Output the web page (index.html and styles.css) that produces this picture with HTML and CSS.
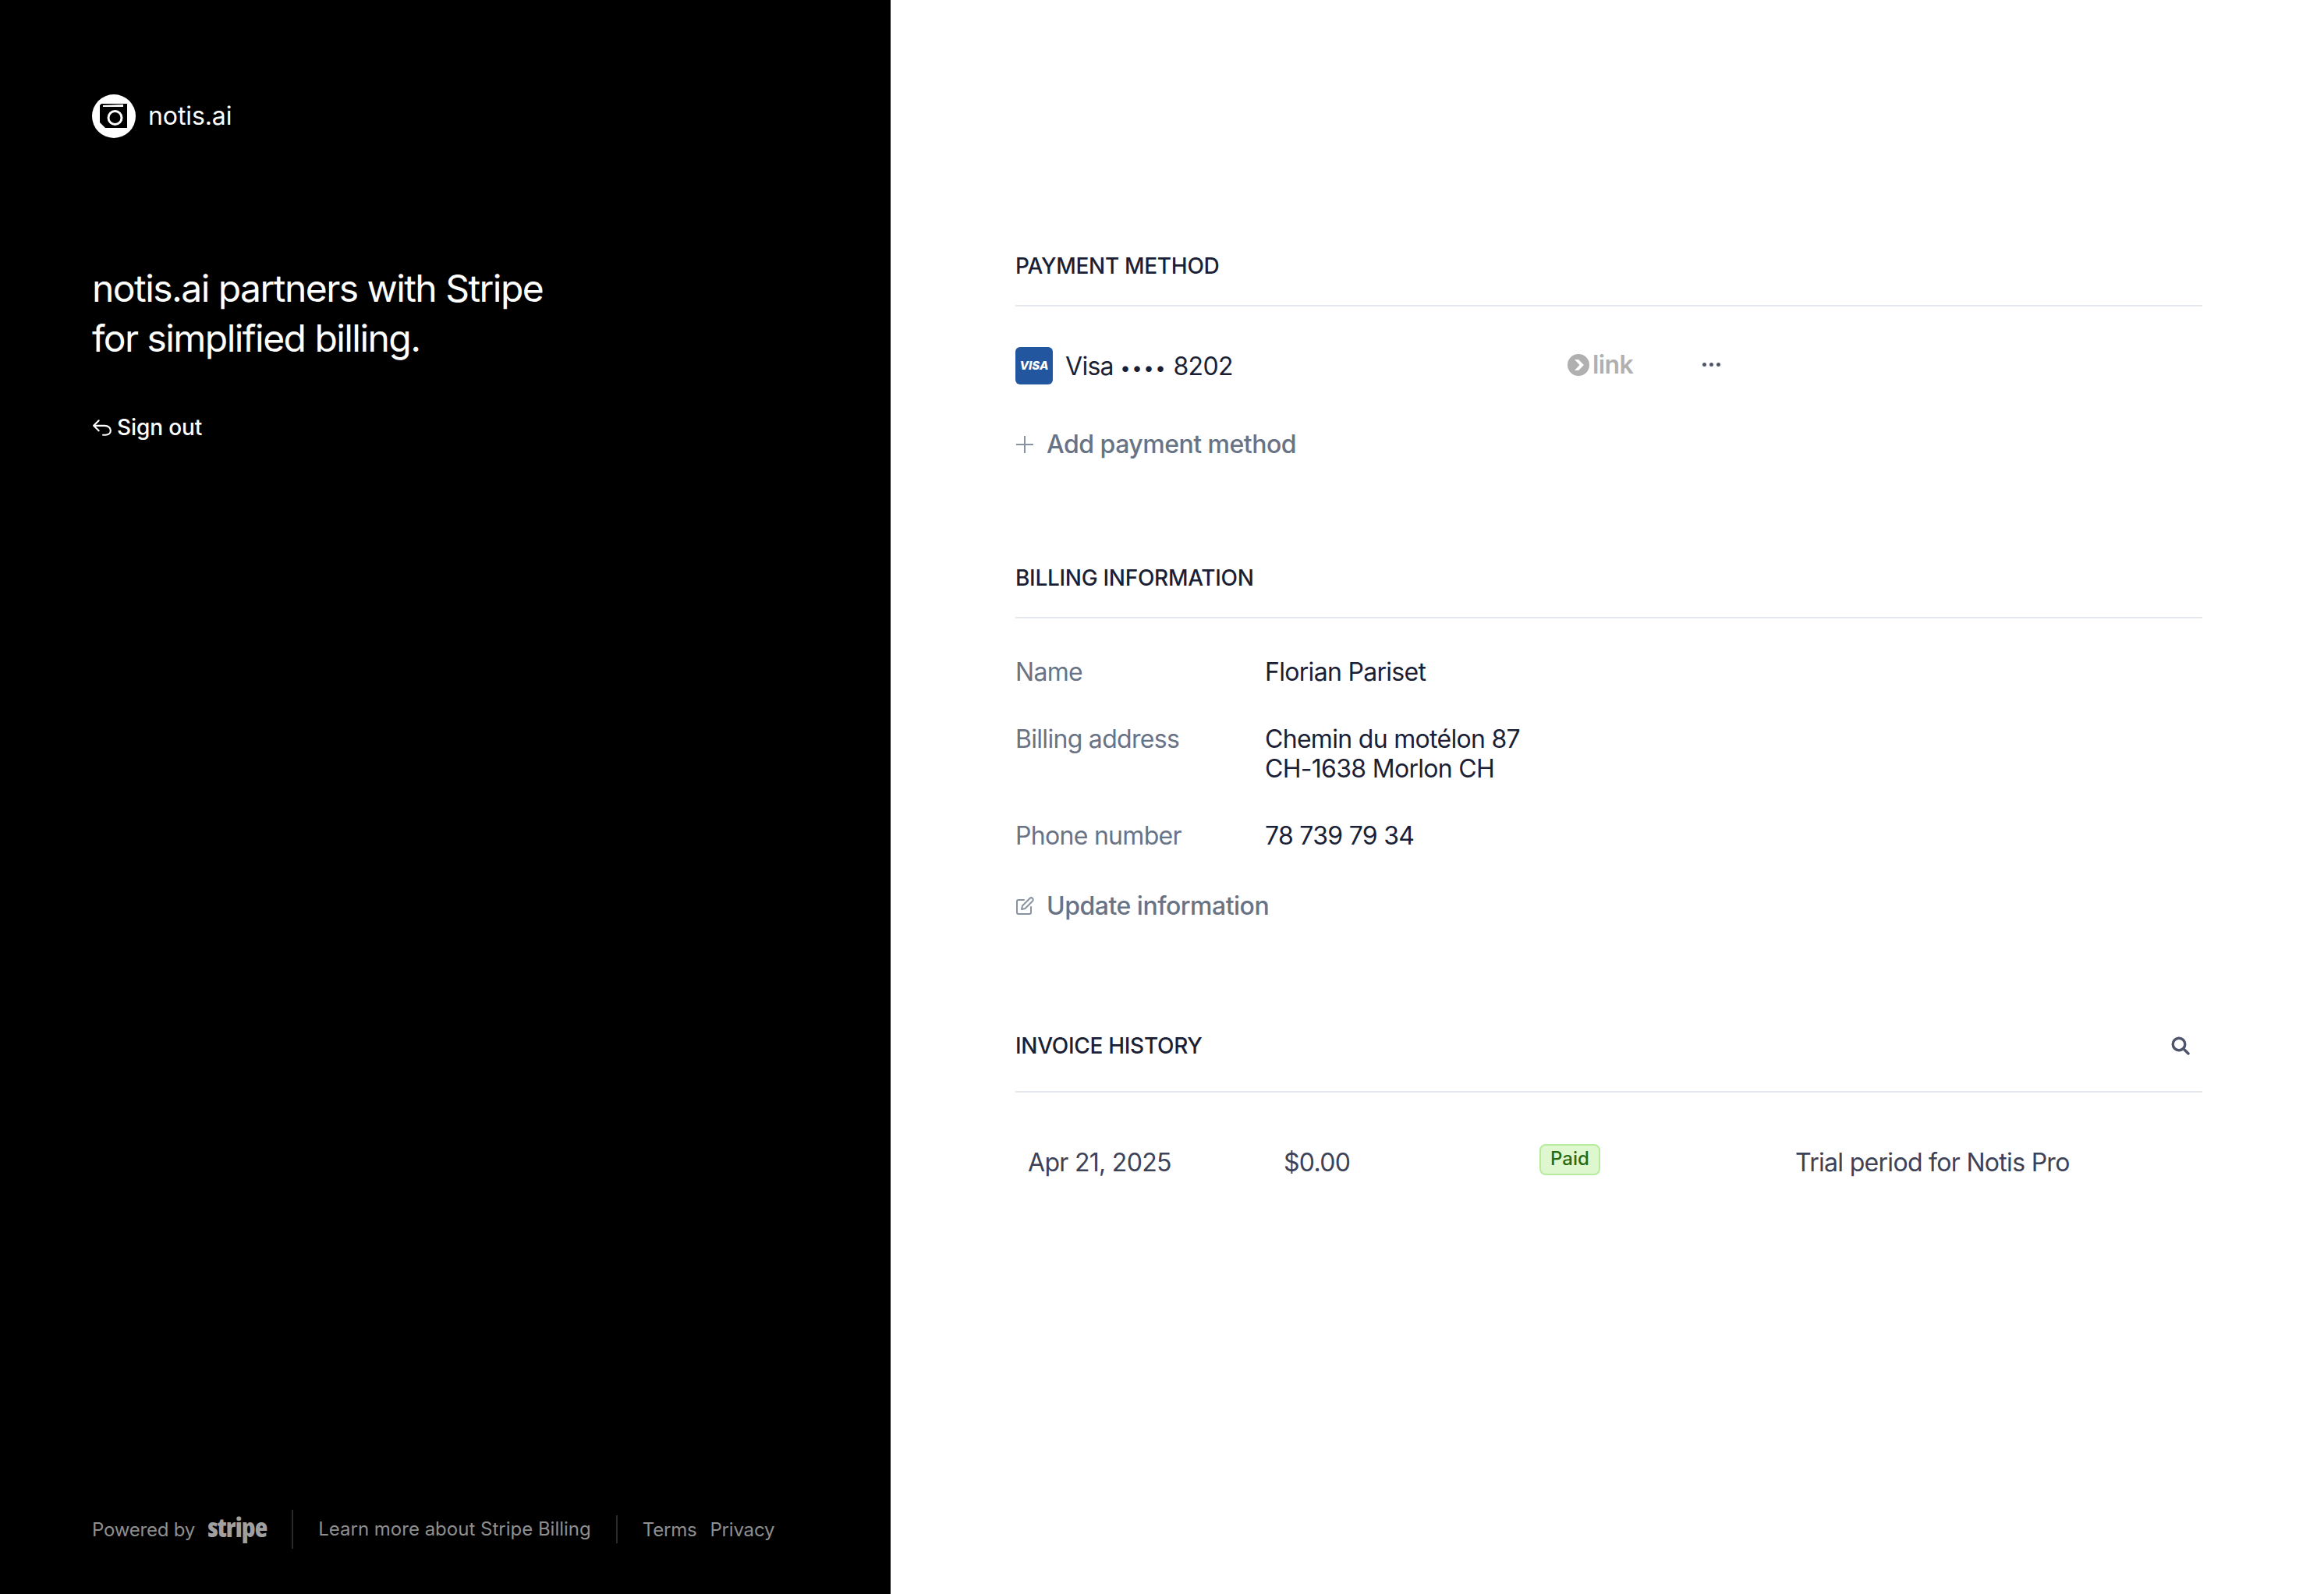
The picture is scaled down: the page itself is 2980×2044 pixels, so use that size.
FILE: index.html
```html
<!DOCTYPE html>
<html>
<head>
	<title>Billing</title>
	<meta charset="UTF-8">
	<link rel="stylesheet" href="styles.css">
</head>
<body>
<div class="page">
	<aside class="side">
		<div class="brand">
			<svg class="brand-logo" viewBox="0 0 56 56">
				<circle cx="28" cy="28" r="28" fill="#fff"/>
				<path d="M10 14 L12 12 H45 V43 H17 L10 36 Z" fill="#000"/>
				<path d="M14 14 L40 13 V16 H14 Z" fill="#fff"/>
				<circle cx="29.500" cy="30" r="8.500" fill="none" stroke="#fff" stroke-width="3"/>
			</svg>
			<span class="brand-name">notis.ai</span>
		</div>
		<h1 class="side-title">notis.ai partners with Stripe<br>for simplified billing.</h1>
		<a class="sign-out">
			<svg class="sign-icon" viewBox="0 0 24 24" fill="none" stroke="#fff" stroke-width="2" stroke-linecap="round" stroke-linejoin="round">
				<path d="M8 4 L2 10 L8 16"/>
				<path d="M2.500 10 H15 C19 10 22 12.500 22 16 C22 19 19.500 21 16 21 H13"/>
			</svg>
			Sign out
		</a>
		<footer class="side-footer">
			<div class="powered">Powered by <span class="stripe-word">stripe</span></div>
			<div class="foot-learn">Learn more about Stripe Billing</div>
			<div class="foot-links"><span>Terms</span><span>Privacy</span></div>
		</footer>
	</aside>

	<main class="content">
		<section class="block block-payment">
			<h2 class="block-title">PAYMENT METHOD</h2>
			<div class="card-row">
				<div class="card-info">
					<span class="visa-badge">VISA</span>
					<span class="card-text">Visa <span class="card-dots">••••</span> 8202</span>
				</div>
				<div class="card-link">
					<svg class="link-icon" viewBox="0 0 28 28">
						<circle cx="14" cy="14" r="14" fill="#b0b0b0"/>
						<path d="M9 7 H14 L21 14 L14 21 H9 L15.500 14 Z" fill="#fff"/>
					</svg>
					<span>link</span>
				</div>
				<div class="card-more"><i></i><i></i><i></i></div>
			</div>
			<a class="action action-add">
				<svg class="action-icon" viewBox="0 0 24 24" fill="none" stroke="#8792a2" stroke-width="2">
					<path d="M12 1 V23 M1 12 H23"/>
				</svg>
				Add payment method
			</a>
		</section>

		<section class="block block-billing">
			<h2 class="block-title">BILLING INFORMATION</h2>
			<dl class="info">
				<dt>Name</dt>
				<dd>Florian Pariset</dd>
				<dt>Billing address</dt>
				<dd>Chemin du motélon 87<br>CH-1638 Morlon CH</dd>
				<dt>Phone number</dt>
				<dd>78 739 79 34</dd>
			</dl>
			<a class="action action-update">
				<svg class="action-icon" viewBox="0 0 24 24" fill="none" stroke="#8792a2" stroke-width="2" stroke-linecap="round" stroke-linejoin="round">
					<path d="M11 4 H4 C2.500 4 2 4.800 2 6 V20 C2 21.500 2.800 22 4 22 H18 C19.500 22 20 21 20 20 V13"/>
					<path d="M8 16 L9 11.500 L18.500 2 C19.500 1 21 1 22 2 C23 3 23 4.500 22 5.500 L12.500 15 Z"/>
				</svg>
				Update information
			</a>
		</section>

		<section class="block block-invoice">
			<div class="block-head">
				<h2 class="block-title">INVOICE HISTORY</h2>
				<svg class="search-icon" viewBox="0 0 24 24" fill="none" stroke="#4f566b" stroke-width="3.400" stroke-linecap="round">
					<circle cx="10" cy="10" r="7.800"/>
					<path d="M16 16 L22 22"/>
				</svg>
			</div>
			<div class="invoice-row">
				<span class="cell">Apr 21, 2025</span>
				<span class="cell">$0.00</span>
				<span><span class="paid">Paid</span></span>
				<span class="cell">Trial period for Notis Pro</span>
			</div>
		</section>
	</main>
</div>
</body>
</html>
```

FILE: styles.css
```css
* {
	box-sizing: border-box;
}
body {
	margin: 0;
	font-family: Inter, "Liberation Sans", sans-serif;
	background: #fff;
}
.page {
	display: flex;
	height: 2044px;
}

/* left panel */
.side {
	width: 1142px;
	background: #000;
	color: #fff;
	padding: 120px 0 58px 118px;
	display: flex;
	flex-direction: column;
}
.brand {
	display: flex;
	align-items: center;
	gap: 16px;
}
.brand-logo {
	width: 56px;
	height: 56px;
}
.brand-name {
	font-size: 32px;
	line-height: 58px;
	letter-spacing: -0.1px;
}
.side-title {
	margin: 160px 0 0;
	font-size: 48px;
	line-height: 64px;
	font-weight: 400;
	letter-spacing: -1.55px;
}
.sign-out {
	display: flex;
	align-items: center;
	gap: 6px;
	margin-top: 62px;
	font-size: 28px;
	line-height: 40px;
	font-weight: 500;
	letter-spacing: -0.1px;
}
.sign-icon {
	width: 26px;
	height: 26px;
}
.side-footer {
	margin-top: auto;
	display: flex;
	align-items: center;
	font-size: 24px;
	color: #8f8f8f;
}
.powered {
	display: flex;
	align-items: center;
	gap: 16px;
	height: 50px;
	padding-right: 32px;
	border-right: 2px solid #2a2a2a;
	letter-spacing: -0.2px;
}
.stripe-word {
	font-family: "Open Sans", sans-serif;
	font-size: 34px;
	line-height: 40px;
	font-weight: 800;
	font-stretch: 75%;
	letter-spacing: -0.9px;
	color: #a0a0a0;
	margin-bottom: 6px;
}
.foot-learn {
	height: 36px;
	line-height: 36px;
	padding: 0 32px;
	border-right: 2px solid #2a2a2a;
}
.foot-links {
	display: flex;
	gap: 17px;
	padding-left: 32px;
	letter-spacing: -0.2px;
}

/* right panel */
.content {
	flex: 1;
	padding: 323px 156px 0 160px;
}
.block-title {
	margin: 0;
	font-size: 28px;
	line-height: 36px;
	font-weight: 500;
	letter-spacing: -0.3px;
	color: #1a1f36;
}
.block-payment .block-title,
.block-billing .block-title,
.block-head {
	padding-bottom: 32px;
	border-bottom: 2px solid #e3e8ee;
}
.block-head .block-title {
	padding: 0;
	border: 0;
}
.block-billing {
	margin-top: 133px;
}
.block-invoice {
	margin-top: 141px;
}
.block-head {
	display: flex;
	justify-content: space-between;
	align-items: center;
	padding-bottom: 40px;
}

.card-row {
	display: flex;
	align-items: center;
	height: 48px;
	margin-top: 52px;
}
.card-info {
	display: flex;
	align-items: center;
	gap: 16px;
	width: 708px;
}
.visa-badge {
	width: 48px;
	height: 48px;
	border-radius: 6px;
	background: #22569f;
	color: #fff;
	font-size: 15px;
	font-weight: 800;
	font-style: italic;
	line-height: 48px;
	text-align: center;
}
.card-text {
	font-size: 32px;
	letter-spacing: -0.7px;
	color: #1a1f36;
}
.card-dots {
	font-size: 24px;
	letter-spacing: 1.500px;
	vertical-align: 1px;
}
.card-link {
	display: flex;
	align-items: center;
	gap: 4px;
	width: 173px;
	padding-bottom: 3px;
	color: #b0b0b0;
	font-size: 32px;
	font-weight: 600;
	letter-spacing: -0.6px;
}
.link-icon {
	width: 28px;
	height: 28px;
}
.card-more {
	display: flex;
	gap: 4px;
	padding-bottom: 3px;
}
.card-more i {
	width: 5px;
	height: 5px;
	border-radius: 50%;
	background: #4f566b;
}

.action {
	display: flex;
	align-items: center;
	color: #697386;
	font-size: 32px;
	line-height: 40px;
	font-weight: 500;
	letter-spacing: -0.5px;
}
.action-icon {
	width: 24px;
	height: 24px;
	margin-right: 16px;
}
.action-add {
	margin-top: 57px;
}

.info {
	display: grid;
	grid-template-columns: 320px 1fr;
	row-gap: 48px;
	margin: 50px 0 0;
	font-size: 32px;
	line-height: 38px;
	letter-spacing: -0.7px;
}
.info dt {
	color: #697386;
}
.info dd {
	margin: 0;
	color: #1a1f36;
}
.action-update {
	margin-top: 51px;
}

.invoice-row {
	display: grid;
	grid-template-columns: 328px 328px 328px 1fr;
	margin-top: 66px;
	padding-left: 16px;
	font-size: 32px;
	line-height: 40px;
	letter-spacing: -0.7px;
	color: #3c4257;
}
.cell {
	padding-top: 4px;
}
.paid {
	display: inline-block;
	height: 40px;
	padding: 0 12px;
	border: 2px solid #b7ec9d;
	border-radius: 8px;
	background: #def7cf;
	color: #276a14;
	font-size: 24px;
	line-height: 34px;
	font-weight: 500;
	letter-spacing: 0;
	vertical-align: top;
}
.search-icon {
	width: 24px;
	height: 24px;
	margin-right: 16px;
}
```
